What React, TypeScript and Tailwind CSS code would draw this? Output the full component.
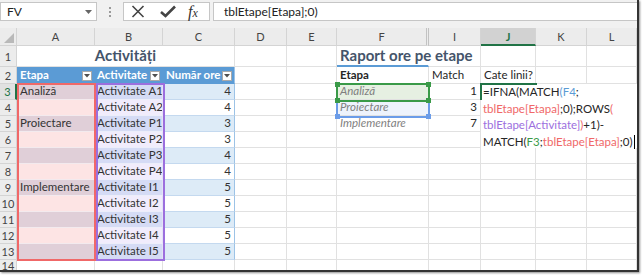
import React from "react";
import { twMerge } from "tailwind-merge";

const etape: Record<number, string> = { 3: "Analiză", 5: "Proiectare", 9: "Implementare" };
const activitati = ["A1", "A2", "P1", "P2", "P3", "P4", "I1", "I2", "I3", "I4", "I5"];
const ore = [4, 4, 3, 3, 4, 4, 5, 5, 5, 5, 5];

function Cell({ children, className }: { children?: React.ReactNode; className?: string }) {
  return (
    <div
      className={twMerge(
        "flex min-w-0 items-end overflow-hidden whitespace-nowrap border-r border-b border-[#e1e1e1] px-[3px] pb-[1px] text-[11.5px] leading-[14px] text-[#262626]",
        className
      )}
    >
      {children}
    </div>
  );
}

function RowHead({ n, active }: { n: number; active?: boolean }) {
  return (
    <div
      className={twMerge(
        "flex items-center justify-center border-r border-b border-[#d4d4d4] bg-[#ececec] text-[11px] leading-none text-[#444]",
        active && "border-r-2 border-r-[#217346] bg-[#e1e1e1] text-[#217346]"
      )}
    >
      {n}
    </div>
  );
}

function ColHead({ l, className }: { l: string; className?: string }) {
  return (
    <div
      className={twMerge(
        "flex items-center justify-center border-r border-b border-[#d4d4d4] bg-[#ececec] text-[11px] leading-none text-[#444]",
        className
      )}
    >
      {l}
    </div>
  );
}

function Filter() {
  return (
    <span className="mb-[1px] ml-auto flex h-[10px] w-[10px] shrink-0 items-center justify-center border border-[#a9a9a9] bg-white">
      <svg width="6" height="4" viewBox="0 0 6 4">
        <path d="M0 0 L6 0 L3 3.5 Z" fill="#505050" />
      </svg>
    </span>
  );
}

function Handle({ className }: { className: string }) {
  return <span className={twMerge("absolute h-[5px] w-[5px]", className)} />;
}

function Toolbar() {
  return (
    <div className="flex h-[28px] items-start bg-[#f1f1f1] pt-[2px]">
      <div className="flex h-[19px] w-[97px] items-center border border-[#c6c6c6] bg-white pl-[6px] pr-[4px] text-[12px] text-[#222]">
        FV
        <svg className="ml-auto" width="7" height="4" viewBox="0 0 7 4">
          <path d="M0 0 L7 0 L3.5 4 Z" fill="#666" />
        </svg>
      </div>
      <div className="flex h-[19px] w-[26px] flex-col items-center justify-center gap-[2px]">
        <span className="h-[2px] w-[2px] bg-[#9a9a9a]" />
        <span className="h-[2px] w-[2px] bg-[#9a9a9a]" />
        <span className="h-[2px] w-[2px] bg-[#9a9a9a]" />
      </div>
      <div className="flex h-[19px] w-[87px] items-center border border-[#c6c6c6] bg-white pl-[7px]">
        <svg width="14" height="13" viewBox="0 0 14 13">
          <path d="M1.5 1 L12.5 12 M12.5 1 L1.5 12" stroke="#444" strokeWidth="1.6" />
        </svg>
        <svg className="ml-[15px]" width="16" height="13" viewBox="0 0 16 13">
          <path d="M1 7 L5.5 11 L15 1.5" stroke="#444" strokeWidth="2.6" fill="none" />
        </svg>
        <span className="ml-[12px] font-['Liberation_Serif',serif] text-[16px] italic leading-none text-[#333]">
          f<span className="text-[12px]">x</span>
        </span>
      </div>
      <div className="ml-[3px] flex h-[19px] flex-1 items-center border border-r-0 border-[#c6c6c6] bg-white pl-[10px] text-[12px] text-[#222]">
        tblEtape[Etapa];0)
      </div>
    </div>
  );
}

function Sheet() {
  const body = [];
  for (let r = 3; r <= 14; r++) {
    const i = r - 3;
    const band = r % 2 === 1;
    const inTable = r <= 13;
    body.push(<RowHead key={`h${r}`} n={r} active={r === 3} />);
    if (inTable) {
      body.push(
        <Cell
          key={`a${r}`}
          className={twMerge(
            "border-b-[#f3eaee] border-r-[#e9dde3] text-[#333]",
            band ? "bg-[#e0cfd8]" : "bg-[#fde4e4]"
          )}
        >
          {etape[r] ?? ""}
        </Cell>
      );
      body.push(
        <Cell
          key={`b${r}`}
          className={twMerge(
            "border-b-[#eceefa] border-r-[#e3e2f6] pl-[2px] text-[#333]",
            band ? "bg-[#d5dbf5]" : "bg-[#f1ecfc]"
          )}
        >
          Activitate {activitati[i]}
        </Cell>
      );
      body.push(
        <Cell
          key={`c${r}`}
          className={twMerge(
            "justify-end border-b-[#c4d9ef] border-r-[#9dc3e6] text-[#333]",
            band ? "bg-[#ddebf7]" : "bg-white"
          )}
        >
          {ore[i]}
        </Cell>
      );
    } else {
      body.push(<Cell key={`a${r}`} />, <Cell key={`b${r}`} />, <Cell key={`c${r}`} />);
    }
    body.push(<Cell key={`d${r}`} />, <Cell key={`e${r}`} />);
    body.push(
      <Cell
        key={`f${r}`}
        className={twMerge(
          "italic text-[#7f7f7f]",
          r === 3 && "bg-[#e6f0e2]",
          r === 4 && "bg-[#eef3fc]"
        )}
      >
        {r === 3 ? "Analiză" : r === 4 ? "Proiectare" : r === 5 ? "Implementare" : ""}
      </Cell>
    );
    body.push(
      <Cell key={`i${r}`} className="justify-end">
        {r === 3 ? "1" : r === 4 ? "3" : r === 5 ? "7" : ""}
      </Cell>
    );
    body.push(<Cell key={`j${r}`} />, <Cell key={`k${r}`} />, <Cell key={`l${r}`} />);
  }

  return (
    <div className="relative grid h-[242px] grid-cols-[17px_78px_68px_72px_52px_50px_92px_52px_55px_51px_50px] grid-rows-[18px_21px_17px_repeat(11,16px)_1fr] overflow-hidden bg-white">
      {/* column headers */}
      <div className="flex items-end justify-end border-r border-b border-[#d4d4d4] bg-[#ececec] p-[2px]">
        <svg width="10" height="10" viewBox="0 0 10 10">
          <path d="M10 0 L10 10 L0 10 Z" fill="#b9b9b9" />
        </svg>
      </div>
      <ColHead l="A" />
      <ColHead l="B" />
      <ColHead l="C" />
      <ColHead l="D" />
      <ColHead l="E" />
      <ColHead l="F" className="border-r-[3px] border-double border-r-[#c2c2c2]" />
      <ColHead l="I" />
      <ColHead l="J" className="border-b-2 border-b-[#217346] bg-[#d2d2d2] font-bold text-[#217346]" />
      <ColHead l="K" />
      <ColHead l="L" />

      {/* row 1 */}
      <RowHead n={1} />
      <Cell className="col-span-3 justify-center pb-[2px] text-[15px] font-bold leading-[18px] text-[#44546a]">
        Activități
      </Cell>
      <Cell />
      <Cell />
      <Cell className="relative z-10 overflow-visible border-r-transparent border-b-2 border-b-[#5b9bd5] pb-[1px] text-[15px] font-bold leading-[18px] text-[#44546a]">
        Raport ore pe etape
      </Cell>
      <Cell />
      <Cell />
      <Cell />
      <Cell />

      {/* row 2 */}
      <RowHead n={2} />
      <Cell className="border-r-[#5b9bd5] border-b-[#5b9bd5] bg-[#5b9bd5] pr-[2px] font-bold text-white">
        Etapa
        <Filter />
      </Cell>
      <Cell className="border-r-[#5b9bd5] border-b-[#5b9bd5] bg-[#5b9bd5] pl-[2px] pr-[2px] font-bold text-white">
        Activitate
        <Filter />
      </Cell>
      <Cell className="border-r-[#9dc3e6] border-b-[#5b9bd5] bg-[#5b9bd5] pr-[2px] font-bold text-white">
        Număr ore
        <Filter />
      </Cell>
      <Cell />
      <Cell />
      <Cell className="font-bold">Etapa</Cell>
      <Cell>Match</Cell>
      <Cell>Cate linii?</Cell>
      <Cell />
      <Cell />

      {body}

      {/* reference highlights */}
      <div className="pointer-events-none absolute left-[17px] top-[55px] h-[178px] w-[79px] border-2 border-[#f06868]" />
      <div className="pointer-events-none absolute left-[96px] top-[55px] h-[178px] w-[69px] border-2 border-[#9c6fde]" />
      <div className="pointer-events-none absolute left-[336px] top-[72px] h-[18px] w-[94px] border-2 border-[#6b9ce8]">
        <Handle className="-bottom-[3px] -left-[3px] bg-[#6b9ce8]" />
        <Handle className="-bottom-[3px] -right-[3px] bg-[#6b9ce8]" />
      </div>
      <div className="pointer-events-none absolute left-[336px] top-[55px] h-[19px] w-[94px] border-2 border-[#3a9a48]">
        <Handle className="-left-[3px] -top-[3px] bg-[#3a9a48]" />
        <Handle className="-right-[3px] -top-[3px] bg-[#3a9a48]" />
        <Handle className="-bottom-[3px] -left-[3px] bg-[#3a9a48]" />
        <Handle className="-bottom-[3px] -right-[3px] bg-[#3a9a48]" />
      </div>

      {/* in-cell editor for J3 */}
      <div className="absolute left-[481px] top-[56px] h-[64px] w-[156px] bg-white pl-[2px] text-[11.5px] leading-[16.5px] text-[#262626]">
        <div className="whitespace-pre">
          =IFNA(MATCH<span className="text-[#5b9bd5]">(F4</span>;
        </div>
        <div className="whitespace-pre">
          <span className="text-[#f06868]">tblEtape[Etapa]</span>;0);ROWS<span className="text-[#f06868]">(</span>
        </div>
        <div className="whitespace-pre">
          <span className="text-[#9c6fde]">tblEtape[Activitate]</span>
          <span className="text-[#f06868]">)</span>+1)-
        </div>
        <div className="flex items-center whitespace-pre">
          MATCH(<span className="text-[#3a9a48]">F3</span>;<span className="text-[#f06868]">tblEtape[Etapa]</span>;0)
          <span className="ml-[1px] h-[14px] w-[1px] bg-black" />
        </div>
      </div>
      <div className="absolute left-[480px] top-[55px] h-[2px] w-[57px] bg-[#217346]" />
      <div className="absolute left-[480px] top-[55px] h-[17px] w-[2px] bg-[#217346]" />
    </div>
  );
}

export default function App() {
  return (
    <div className="h-[275px] w-[644px] overflow-hidden bg-white font-['Lato',sans-serif]">
      <div className="h-[272px] w-[639px] overflow-hidden border-r-2 border-b-2 border-[#333] shadow-[1px_1px_2px_rgba(0,0,0,0.45)]">
        <Toolbar />
        <Sheet />
      </div>
    </div>
  );
}
